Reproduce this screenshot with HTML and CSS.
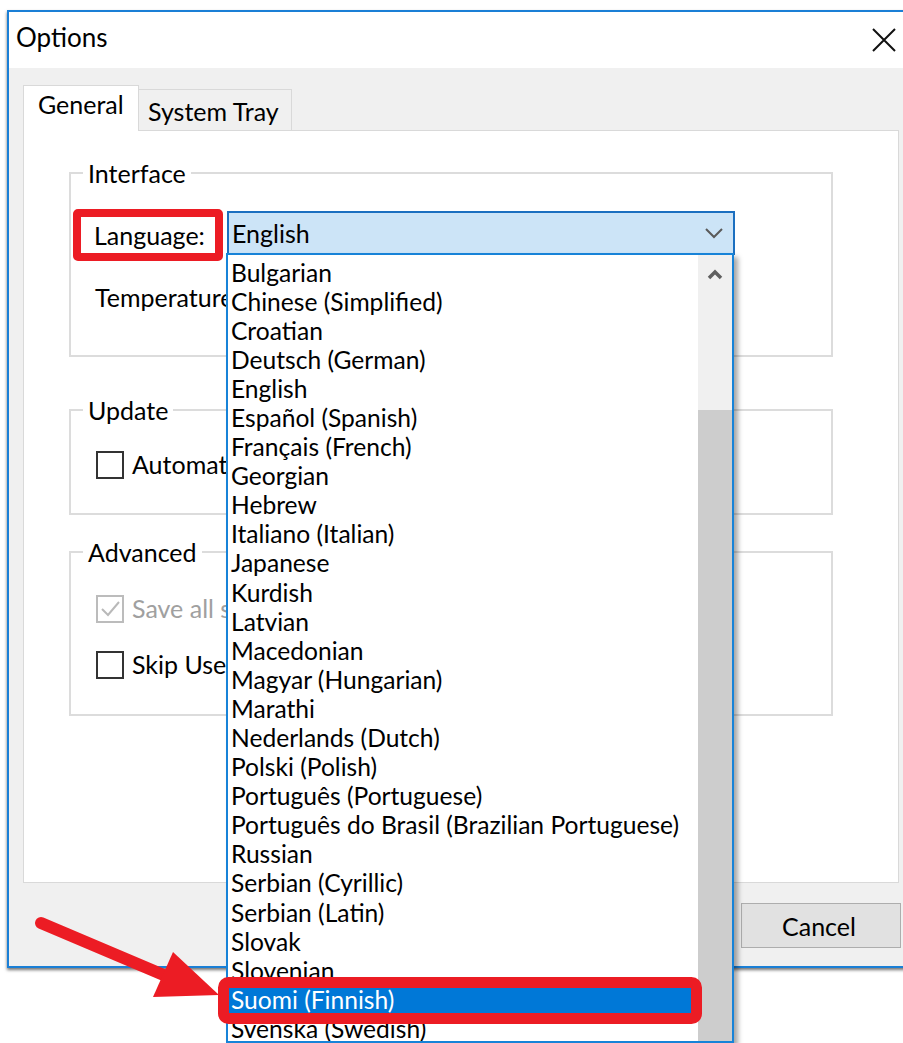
FILE: index.html
```html
<!DOCTYPE html>
<html lang="en">
<head>
<meta charset="utf-8">
<title>Options</title>
<link rel="stylesheet" href="styles.css">
</head>
<body>
<div class="screen">
  <div class="window">
    <div class="titlebar">
      <span class="title">Options</span>
      <svg class="close" width="24" height="24" viewBox="0 0 24 24" aria-label="Close">
        <path d="M1 1 L23 23 M23 1 L1 23" stroke="#111" stroke-width="2" fill="none"/>
      </svg>
    </div>
    <div class="client">
      <div class="tabs">
        <div class="tab tab-active">General</div>
        <div class="tab tab-idle">System Tray</div>
      </div>
      <div class="tabpage">
        <fieldset class="group group-interface">
          <legend>Interface</legend>
          <div class="lang-row">
            <label class="lang-label">Language:</label>
            <div class="combo">
              <span class="combo-value">English</span>
              <svg class="combo-chevron" width="18" height="11" viewBox="0 0 18 11">
                <path d="M1 1 L9 9 L17 1" stroke="#5a5a5a" stroke-width="2" fill="none"/>
              </svg>
              <div class="droplist">
                <ul class="items">
                  <li>Bulgarian</li>
                  <li>Chinese (Simplified)</li>
                  <li>Croatian</li>
                  <li>Deutsch (German)</li>
                  <li>English</li>
                  <li>Español (Spanish)</li>
                  <li>Français (French)</li>
                  <li>Georgian</li>
                  <li>Hebrew</li>
                  <li>Italiano (Italian)</li>
                  <li>Japanese</li>
                  <li>Kurdish</li>
                  <li>Latvian</li>
                  <li>Macedonian</li>
                  <li>Magyar (Hungarian)</li>
                  <li>Marathi</li>
                  <li>Nederlands (Dutch)</li>
                  <li>Polski (Polish)</li>
                  <li>Português (Portuguese)</li>
                  <li>Português do Brasil (Brazilian Portuguese)</li>
                  <li>Russian</li>
                  <li>Serbian (Cyrillic)</li>
                  <li>Serbian (Latin)</li>
                  <li>Slovak</li>
                  <li>Slovenian</li>
                  <li class="selected">Suomi (Finnish)</li>
                  <li>Svenska (Swedish)</li>
                </ul>
                <div class="vscroll">
                  <div class="vscroll-up">
                    <svg width="16" height="12" viewBox="0 0 16 12">
                      <path d="M2 10 L8 4 L14 10" stroke="#5f5f5f" stroke-width="3.5" fill="none"/>
                    </svg>
                  </div>
                  <div class="vscroll-thumb"></div>
                </div>
              </div>
            </div>
          </div>
          <div class="plain-row">Temperature</div>
        </fieldset>

        <fieldset class="group group-update">
          <legend>Update</legend>
          <div class="check-row">
            <span class="checkbox"></span>
            <span>Automati</span>
          </div>
        </fieldset>

        <fieldset class="group group-advanced">
          <legend>Advanced</legend>
          <div class="check-row disabled">
            <span class="checkbox checked">
              <svg width="24" height="24" viewBox="0 0 24 24">
                <path d="M4 12 L10 18 L21 5" stroke="#b9b9b9" stroke-width="2" fill="none"/>
              </svg>
            </span>
            <span>Save all s</span>
          </div>
          <div class="check-row check-row-second">
            <span class="checkbox"></span>
            <span>Skip User</span>
          </div>
        </fieldset>
      </div>
      <div class="buttons">
        <button class="btn">Cancel</button>
      </div>
    </div>
  </div>
</div>

<svg class="callout" width="903" height="1043" viewBox="0 0 903 1043">
  <line x1="41" y1="923" x2="166" y2="976" stroke="#ec1c24" stroke-width="12" stroke-linecap="round"/>
  <polygon points="153,997 173,952 219,995" fill="#ec1c24"/>
  <rect x="223.5" y="982.5" width="473" height="36" rx="5" fill="none" stroke="#ec1c24" stroke-width="11"/>
</svg>
</body>
</html>
```

FILE: styles.css
```css
html, body {
  margin: 0;
  padding: 0;
  height: 100%;
  overflow: hidden;
  background: #fff;
}

body {
  position: relative;
  font-family: Lato, "Liberation Sans", sans-serif;
  font-size: 25px;
  color: #000;
}

.screen {
  padding: 10px 0 0 7px;
}

/* dialog frame */
.window {
  width: 904px;
  border: 2px solid #1a7fd6;
  box-shadow: 0 2px 3px rgba(0, 0, 0, 0.55);
}

.titlebar {
  box-sizing: border-box;
  height: 56px;
  background: #fff;
  display: flex;
  align-items: center;
  padding: 0 0 6px 7px;
}

.title {
  line-height: 28px;
  font-size: 26px;
}

.close {
  margin: 6px 17px 0 auto;
}

.client {
  background: #f0f0f0;
  padding: 17px 14px 18px 14px;
}

/* tab strip */
.tabs {
  display: flex;
  align-items: flex-end;
  height: 45px;
  position: relative;
  z-index: 1;
}

.tab {
  box-sizing: border-box;
  border: 1px solid #d9d9d9;
  border-bottom: none;
  line-height: 29px;
  white-space: nowrap;
}

.tab-active {
  width: 116px;
  height: 46px;
  margin-bottom: -1px;
  background: #fff;
  padding: 4px 0 0 14px;
}

.tab-idle {
  width: 153px;
  height: 41px;
  border-left: none;
  background: #f0f0f0;
  padding: 7px 0 0 9px;
}

.tabpage {
  box-sizing: border-box;
  height: 753px;
  border: 1px solid #d9d9d9;
  background: #fff;
  padding-left: 45px;
}

/* group boxes */
.group {
  box-sizing: border-box;
  width: 764px;
  margin: 0;
  padding: 0;
  border: 2px solid #dcdcdc;
  min-inline-size: 0;
}

.group legend {
  margin-left: 12px;
  padding: 0 5px;
  line-height: 28px;
}

.group-interface {
  margin-top: 28px;
  padding-bottom: 43px;
}

.group-update {
  margin-top: 39px;
  padding-bottom: 34px;
}

.group-advanced {
  margin-top: 23px;
  padding-bottom: 35px;
}

.lang-row {
  display: flex;
  align-items: flex-start;
  margin-top: 22px;
}

.lang-label {
  box-sizing: border-box;
  width: 150px;
  height: 52px;
  margin-left: 2px;
  border: 8px solid #ec1c24;
  border-radius: 5px;
  padding-left: 13px;
  line-height: 36px;
  background: #fff;
}

/* combo box */
.combo {
  position: relative;
  box-sizing: border-box;
  width: 508px;
  height: 44px;
  margin: 2px 0 0 4px;
  border: 2px solid #1b6fc0;
  background: #cce4f7;
  display: flex;
  align-items: center;
  padding-left: 3px;
}

.combo-value {
  line-height: 29px;
}

.combo-chevron {
  margin-left: auto;
  margin-right: 10px;
}

.droplist {
  position: absolute;
  left: -3px;
  top: 40px;
  z-index: 5;
  box-sizing: border-box;
  width: 508px;
  height: 790px;
  border: 2px solid #1783d8;
  background: #fff;
  box-shadow: 4px 4px 5px rgba(0, 0, 0, 0.35);
  display: flex;
  overflow: hidden;
}

.items {
  flex: 1;
  list-style: none;
  margin: 0;
  padding: 2.5px 0 0 0;
  font-size: 24.6px;
}

.items li {
  line-height: 29.1px;
  padding-left: 3px;
  white-space: nowrap;
}

.items li.selected {
  background: #0078d7;
  color: #fff;
}

.vscroll {
  width: 34px;
  background: #f0f0f0;
  display: flex;
  flex-direction: column;
}

.vscroll-up {
  height: 40px;
  display: flex;
  justify-content: center;
  padding-top: 13px;
  box-sizing: border-box;
}

.vscroll-thumb {
  margin-top: 115px;
  flex: 1;
  background: #cdcdcd;
}

.plain-row {
  margin-top: 22px;
  padding-left: 24px;
  line-height: 29px;
  white-space: nowrap;
}

/* check boxes */
.check-row {
  display: flex;
  align-items: center;
  gap: 8px;
  margin-top: 26px;
  padding-left: 25px;
  line-height: 29px;
  white-space: nowrap;
}

.group-advanced .check-row {
  margin-top: 28px;
}

.group-advanced .check-row-second {
  margin-top: 27px;
}

.checkbox {
  box-sizing: border-box;
  width: 28px;
  height: 28px;
  border: 2px solid #333;
  background: #fff;
  display: flex;
  align-items: center;
  justify-content: center;
  flex: none;
}

.check-row.disabled {
  color: #a0a0a0;
}

.checkbox.checked {
  border-color: #bcbcbc;
}

/* dialog buttons */
.buttons {
  display: flex;
  justify-content: flex-end;
  margin-top: 20px;
  margin-right: -2px;
}

.btn {
  box-sizing: border-box;
  width: 160px;
  height: 45px;
  border: 1px solid #adadad;
  background: #e1e1e1;
  font-family: inherit;
  font-size: 25px;
  color: #000;
  padding: 0 4px 0 0;
}

/* annotation layer */
.callout {
  position: absolute;
  left: 0;
  top: 0;
  z-index: 10;
  pointer-events: none;
}
```
